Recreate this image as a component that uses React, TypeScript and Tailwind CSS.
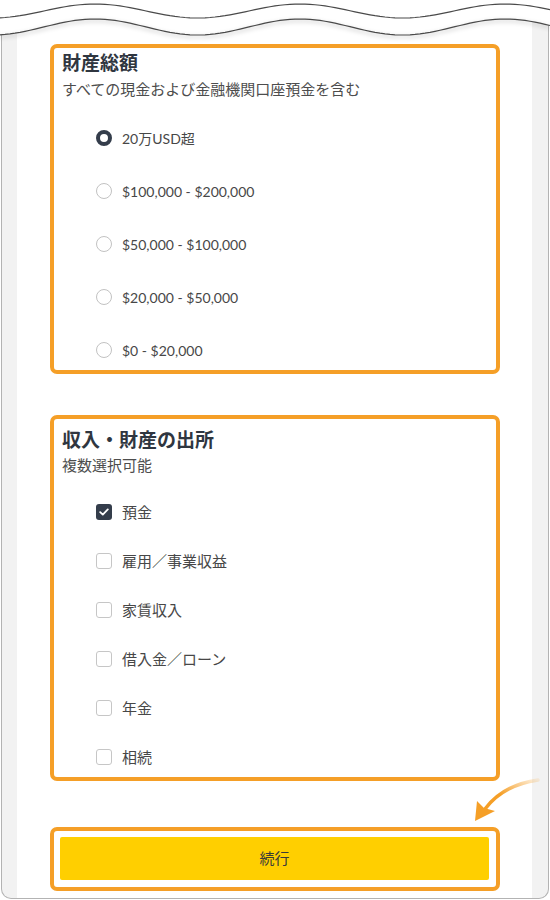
import React from 'react'

const FONT = { fontFamily: 'Lato, "Noto Sans CJK JP", sans-serif' }

const assets = ['20万USD超', '$100,000 - $200,000', '$50,000 - $100,000', '$20,000 - $50,000', '$0 - $20,000']
const sources = ['預金', '雇用／事業収益', '家賃収入', '借入金／ローン', '年金', '相続']

// torn paper edge, sampled cosine (crest at x=505)
const waveY = (x: number, c: number, a: number) => c - a * Math.cos((2 * Math.PI * (x - 505)) / 205)
const wave = (c: number, a: number) => {
  let d = ''
  for (let x = 0; x <= 550; x += 5) {
    d += (x === 0 ? 'M' : ' L') + x + ' ' + waveY(x, c, a).toFixed(2)
  }
  return d
}

function Radio({ checked }: { checked: boolean }) {
  return checked ? (
    <span className="w-4 h-4 rounded-full border-[4px] border-[#343d4b] bg-white shrink-0" />
  ) : (
    <span className="w-4 h-4 rounded-full border border-[#c2c2c2] bg-white shrink-0" />
  )
}

function Checkbox({ checked }: { checked: boolean }) {
  return checked ? (
    <span className="w-4 h-4 rounded-[3px] bg-[#343d4b] flex items-center justify-center shrink-0">
      <svg width="10" height="8" viewBox="0 0 10 8" fill="none">
        <path d="M1.2 4.2 L3.8 6.6 L8.8 1.4" stroke="white" strokeWidth="1.8" strokeLinecap="round" strokeLinejoin="round" />
      </svg>
    </span>
  ) : (
    <span className="w-4 h-4 rounded-[3px] border border-[#c6c6c6] bg-white shrink-0" />
  )
}

export default function App() {
  const top = wave(11, 7)
  const bottom = wave(27, 8)
  let fill = 'M0 0 L550 0'
  for (let x = 550; x >= 0; x -= 5) fill += ' L' + x + ' ' + waveY(x, 27, 8).toFixed(2)
  fill += ' Z'

  return (
    <div className="relative w-[550px] h-[900px] bg-white overflow-hidden" style={FONT}>
      <div className="h-full px-[1px] pb-[1px]">
        <div className="h-full border-x border-b border-[#b3b3b3] rounded-b-[10px] bg-[#f2f2f2] pl-[15px] pr-[16px] overflow-hidden">
          <div className="h-full bg-white pt-[44px] pl-[33px] pr-[32px]">
            {/* 財産総額 */}
            <div className="border-[4px] border-[#f59f27] rounded-[7px] pt-[3px] pb-[4px] px-[8px]">
              <h2 className="text-[19px] leading-[24px] font-bold text-[#2f3640]">財産総額</h2>
              <p className="mt-[4px] text-[15px] leading-[20px] text-[#4d4d4d]">すべての現金および金融機関口座預金を含む</p>
              <div className="mt-[23px] pl-[34px] flex flex-col gap-[21px]">
                {assets.map((a, i) => (
                  <div key={a} className="h-8 flex items-center gap-[10px]">
                    <Radio checked={i === 0} />
                    <span className="text-[14px] text-[#474747]">{a}</span>
                  </div>
                ))}
              </div>
            </div>

            {/* 収入・財産の出所 */}
            <div className="mt-[41px] border-[4px] border-[#f59f27] rounded-[7px] pt-[9px] pb-[4px] px-[8px]">
              <h2 className="text-[19px] leading-[24px] font-bold text-[#2f3640]">収入・財産の出所</h2>
              <p className="mt-[3px] text-[15px] leading-[20px] text-[#4d4d4d]">複数選択可能</p>
              <div className="mt-[21px] pl-[34px] flex flex-col gap-[17px]">
                {sources.map((s, i) => (
                  <div key={s} className="h-8 flex items-center gap-[10px]">
                    <Checkbox checked={i === 0} />
                    <span className="text-[15px] text-[#474747]">{s}</span>
                  </div>
                ))}
              </div>
            </div>

            {/* 続行 */}
            <div className="mt-[46px] border-[4px] border-[#f59f27] rounded-[7px] pt-[6px] pb-[7px] pl-[6px] pr-[7px]">
              <button className="w-full h-[43px] rounded-[2px] bg-[#ffcf00] text-[15px] text-[#3a3a3a]">続行</button>
            </div>
          </div>
        </div>
      </div>

      {/* torn top edge */}
      <svg className="absolute top-0 left-0" width="550" height="50" viewBox="0 0 550 50">
        <defs>
          <filter id="tear" x="-5%" y="-50%" width="110%" height="200%">
            <feDropShadow dx="0" dy="2" stdDeviation="2" floodColor="#000" floodOpacity="0.3" />
          </filter>
        </defs>
        <path d={fill} fill="white" />
        <path d={bottom} fill="none" stroke="#4a4a4a" strokeWidth="1.2" filter="url(#tear)" />
        <path d={top} fill="none" stroke="#4a4a4a" strokeWidth="1.2" />
      </svg>

      {/* pointer arrow */}
      <svg className="absolute top-[770px] left-[460px]" width="90" height="60" viewBox="460 770 90 60">
        <defs>
          <linearGradient id="arr" x1="1" y1="0" x2="0" y2="1">
            <stop offset="0" stopColor="#f59f27" stopOpacity="0.15" />
            <stop offset="0.6" stopColor="#f59f27" stopOpacity="1" />
          </linearGradient>
        </defs>
        <path d="M538 780 Q503 785 485 809" fill="none" stroke="url(#arr)" strokeWidth="3.5" strokeLinecap="round" />
        <path d="M475 821 L477 801 L484 808 L495 811 Z" fill="#f59f27" />
      </svg>
    </div>
  )
}
